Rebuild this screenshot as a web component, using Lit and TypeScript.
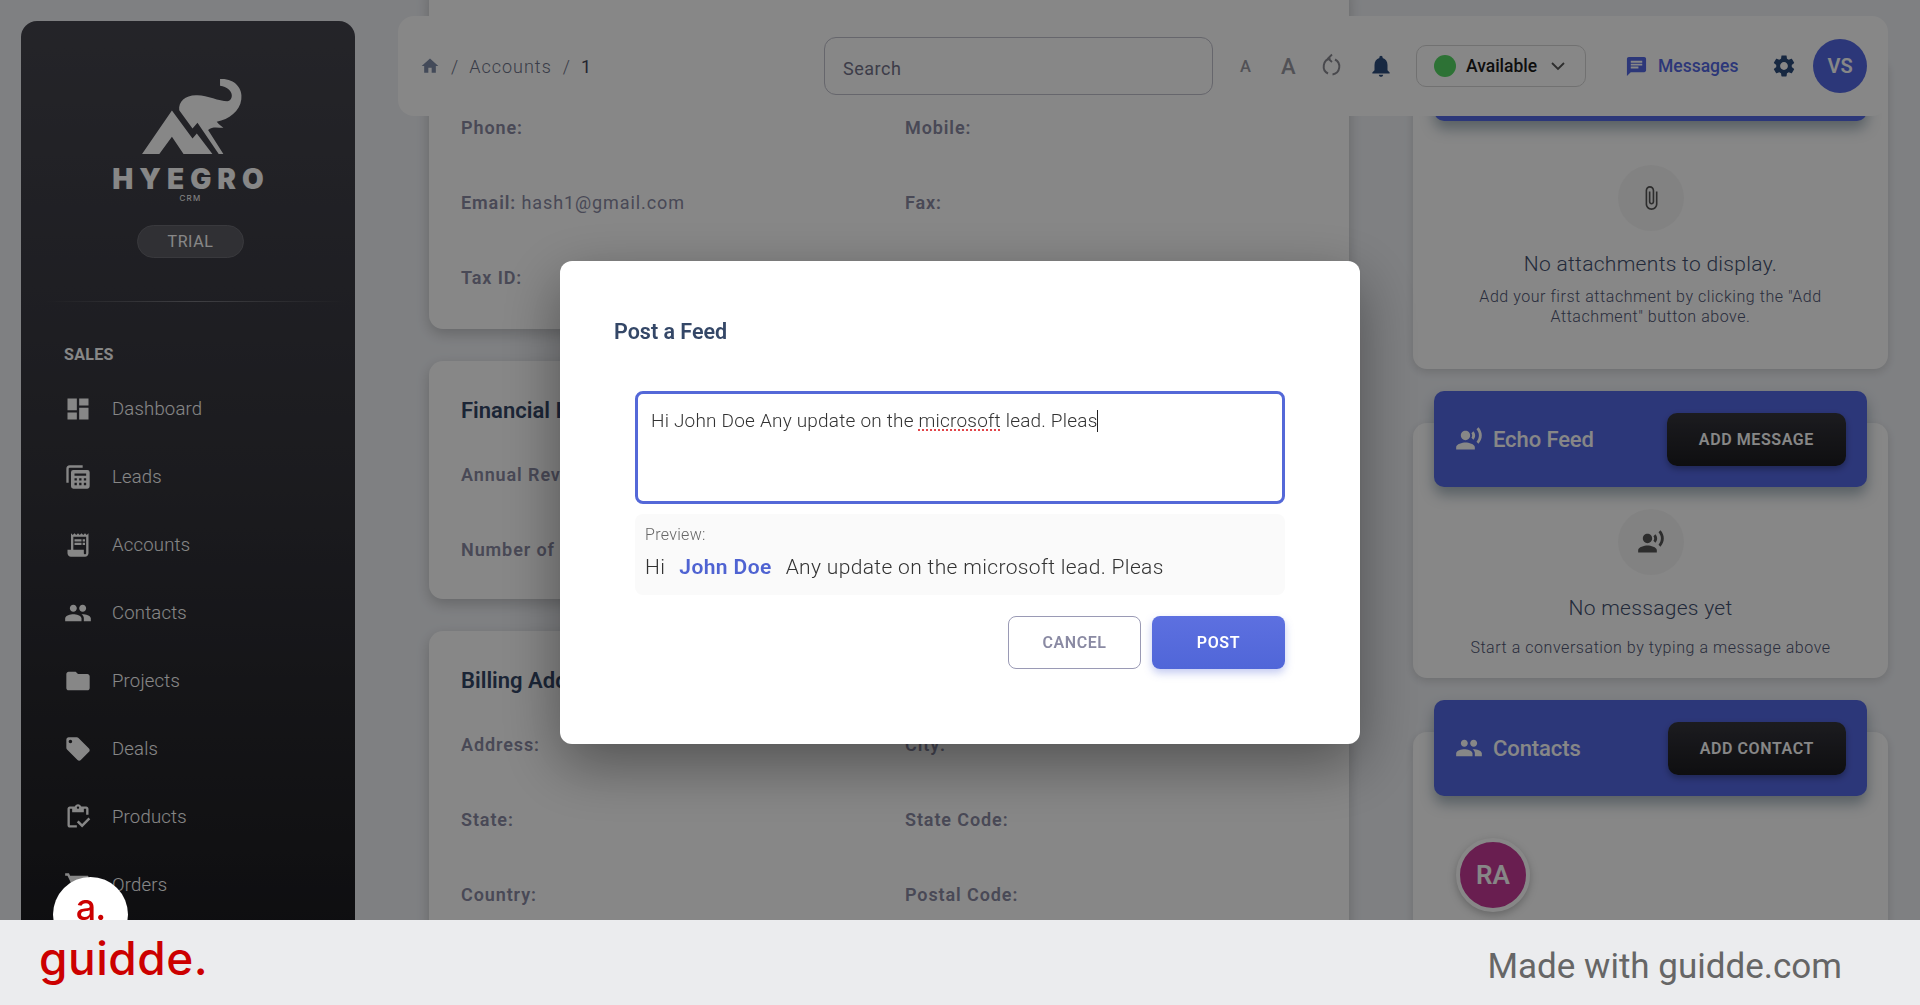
import { LitElement, html, css, svg } from 'lit';
import { customElement } from 'lit/decorators.js';

// material icon paths, 24x24
const ICONS: Record<string, string> = {
  dashboard: 'M3 13h8V3H3v10zm0 8h8v-6H3v6zm10 0h8V11h-8v10zm0-18v6h8V3h-8z',
  receipt:
    'M19.5 3.5L18 2l-1.5 1.5L15 2l-1.5 1.5L12 2l-1.5 1.5L9 2 7.5 3.5 6 2v14H3v3c0 1.66 1.34 3 3 3h12c1.66 0 3-1.34 3-3V2l-1.5 1.5zM19 19c0 .55-.45 1-1 1s-1-.45-1-1v-3H8V5h11v14zM9 7h6v2H9zm7 0h2v2h-2zM9 10h6v2H9zm7 0h2v2h-2z',
  people:
    'M16 11c1.66 0 2.99-1.34 2.99-3S17.66 5 16 5c-1.66 0-3 1.34-3 3s1.34 3 3 3zm-8 0c1.66 0 2.99-1.34 2.99-3S9.66 5 8 5C6.34 5 5 6.34 5 8s1.34 3 3 3zm0 2c-2.33 0-7 1.17-7 3.5V19h14v-2.5c0-2.33-4.67-3.5-7-3.5zm8 0c-.29 0-.62.02-.97.05 1.16.84 1.97 1.97 1.97 3.45V19h6v-2.5c0-2.33-4.67-3.5-7-3.5z',
  folder: 'M10 4H4c-1.1 0-1.99.9-1.99 2L2 18c0 1.1.9 2 2 2h16c1.1 0 2-.9 2-2V8c0-1.1-.9-2-2-2h-8l-2-2z',
  tag: 'M21.41 11.58l-9-9C12.05 2.22 11.55 2 11 2H4c-1.1 0-2 .9-2 2v7c0 .55.22 1.05.59 1.42l9 9c.36.36.86.58 1.41.58.55 0 1.05-.22 1.41-.59l7-7c.37-.36.59-.86.59-1.41 0-.55-.23-1.06-.59-1.42zM5.5 7C4.67 7 4 6.33 4 5.5S4.67 4 5.5 4 7 4.67 7 5.5 6.33 7 5.5 7z',
  clipboard:
    'M5 5h2v3h10V5h2v5h2V5c0-1.1-.9-2-2-2h-4.18C14.4 1.84 13.3 1 12 1s-2.4.84-2.82 2H5c-1.1 0-2 .9-2 2v14c0 1.1.9 2 2 2h6v-2H5V5zm7-2c.55 0 1 .45 1 1s-.45 1-1 1-1-.45-1-1 .45-1 1-1zM21 12.5L15.51 18l-3.01-3-1.5 1.5 4.51 4.5L22.5 14z',
  cart: 'M7 18c-1.1 0-1.99.9-1.99 2S5.9 22 7 22s2-.9 2-2-.9-2-2-2zM1 2v2h2l3.6 7.59-1.35 2.45c-.16.28-.25.61-.25.96 0 1.1.9 2 2 2h12v-2H7.42c-.14 0-.25-.11-.25-.25l.03-.12.9-1.63h7.45c.75 0 1.41-.41 1.75-1.03l3.58-6.49c.08-.14.12-.31.12-.48 0-.55-.45-1-1-1H5.21l-.94-2H1zm16 16c-1.1 0-1.99.9-1.99 2s.89 2 1.99 2 2-.9 2-2-.9-2-2-2z',
  home: 'M10 20v-6h4v6h5v-8h3L12 3 2 12h3v8z',
  bell: 'M12 22c1.1 0 2-.9 2-2h-4c0 1.1.89 2 2 2zm6-6v-5c0-3.07-1.64-5.64-4.5-6.32V4c0-.83-.67-1.5-1.5-1.5s-1.5.67-1.5 1.5v.68C7.63 5.36 6 7.92 6 11v5l-2 2v1h16v-1l-2-2z',
  chat: 'M20 2H4c-1.1 0-1.99.9-1.99 2L2 22l4-4h14c1.1 0 2-.9 2-2V4c0-1.1-.9-2-2-2zM6 9h12v2H6V9zm8 5H6v-2h8v2zm4-6H6V6h12v2z',
  gear: 'M19.14 12.94c.04-.3.06-.61.06-.94 0-.32-.02-.64-.07-.94l2.03-1.58c.18-.14.23-.41.12-.61l-1.92-3.32c-.12-.22-.37-.29-.59-.22l-2.39.96c-.5-.38-1.03-.7-1.62-.94l-.36-2.54c-.04-.24-.24-.41-.48-.41h-3.84c-.24 0-.43.17-.47.41l-.36 2.54c-.59.24-1.13.57-1.62.94l-2.39-.96c-.22-.08-.47 0-.59.22L2.74 8.87c-.12.21-.08.47.12.61l2.03 1.58c-.05.3-.09.63-.09.94s.02.64.07.94l-2.03 1.58c-.18.14-.23.41-.12.61l1.92 3.32c.12.22.37.29.59.22l2.39-.96c.5.38 1.03.7 1.62.94l.36 2.54c.05.24.24.41.48.41h3.84c.24 0 .44-.17.47-.41l.36-2.54c.59-.24 1.13-.56 1.62-.94l2.39.96c.22.08.47 0 .59-.22l1.92-3.32c.12-.22.07-.47-.12-.61l-2.01-1.58zM12 15.6c-1.98 0-3.6-1.62-3.6-3.6s1.62-3.6 3.6-3.6 3.6 1.62 3.6 3.6-1.62 3.6-3.6 3.6z',
  attach:
    'M16.5 6v11.5c0 2.21-1.79 4-4 4s-4-1.79-4-4V5c0-1.38 1.12-2.5 2.5-2.5s2.5 1.12 2.5 2.5v10.5c0 .55-.45 1-1 1s-1-.45-1-1V6H10v9.5c0 1.38 1.12 2.5 2.5 2.5s2.5-1.12 2.5-2.5V5c0-2.21-1.79-4-4-4S7 2.79 7 5v12.5c0 3.04 2.46 5.5 5.5 5.5s5.5-2.46 5.5-5.5V6h-1.5z',
  voice:
    'M9 13c2.21 0 4-1.79 4-4s-1.79-4-4-4-4 1.79-4 4 1.79 4 4 4zm0 2c-2.67 0-8 1.34-8 4v2h16v-2c0-2.66-5.33-4-8-4zm6.76-9.64l-1.68 1.69c.84 1.18.84 2.71 0 3.89l1.68 1.69c2.02-2.02 2.02-5.07 0-7.27zM20.07 2l-1.63 1.63c2.77 3.02 2.77 7.56 0 10.74L20.07 16c3.9-3.89 3.91-9.95 0-14z',
};

const icon = (name: string, size = 24) => html`<svg
  width=${size}
  height=${size}
  viewBox="0 0 24 24"
  fill="currentColor"
  ><path d=${ICONS[name]}></path
></svg>`;

// the stacked calculator on "Leads" isn't a plain material glyph
const leadsIcon = svg`<path d="M2 5a3 3 0 0 1 3-3h11v2H5a1 1 0 0 0-1 1v12H2z" fill="currentColor"></path>
  <path fill-rule="evenodd" fill="currentColor" d="M8 6h12a2 2 0 0 1 2 2v12a2 2 0 0 1-2 2H8a2 2 0 0 1-2-2V8a2 2 0 0 1 2-2zm1 3v2h10V9zm0 4v2h2v-2zm4 0v2h2v-2zm4 0v2h2v-2zM9 17v2h2v-2zm4 0v2h2v-2zm4 0v2h2v-2z"></path>`;

const NAV = [
  { label: 'Dashboard', icon: 'dashboard' },
  { label: 'Leads', icon: 'leads' },
  { label: 'Accounts', icon: 'receipt' },
  { label: 'Contacts', icon: 'people' },
  { label: 'Projects', icon: 'folder' },
  { label: 'Deals', icon: 'tag' },
  { label: 'Products', icon: 'clipboard' },
  { label: 'Orders', icon: 'cart' },
];

const CONTACT_FIELDS = [
  ['Phone:', ''],
  ['Mobile:', ''],
  ['Email:', 'hash1@gmail.com'],
  ['Fax:', ''],
  ['Tax ID:', ''],
  ['', ''],
];
const FINANCIAL_FIELDS = [
  ['Annual Revenue:', ''],
  ['', ''],
  ['Number of Employees:', ''],
  ['', ''],
];
const BILLING_FIELDS = [
  ['Address:', ''],
  ['City:', ''],
  ['State:', ''],
  ['State Code:', ''],
  ['Country:', ''],
  ['Postal Code:', ''],
];

@customElement('app-root')
export class AppRoot extends LitElement {
  static styles = css`
    :host {
      display: block;
      height: 1005px;
      overflow: hidden;
      font-family: Roboto, 'Liberation Sans', sans-serif;
    }
    .page {
      display: flex;
      flex-direction: column;
      height: 1005px;
    }
    .stage {
      position: relative;
      display: flex;
      height: 920px;
      overflow: hidden;
      background: #f0f2f6;
    }

    /* sidebar */
    .sidebar {
      flex: none;
      display: flex;
      flex-direction: column;
      align-items: center;
      width: 334px;
      height: 1000px;
      margin: 21px 0 0 21px;
      padding-top: 57px;
      box-sizing: border-box;
      border-radius: 16px 16px 0 0;
      background: linear-gradient(180deg, #45454e 0%, #34343b 45%, #17171a 100%);
      color: #fff;
    }
    .logo {
      margin-left: 8px;
      display: block;
    }
    .brand {
      margin-top: 8px;
      font-family: Inter, sans-serif;
      font-weight: 900;
      font-size: 28px;
      line-height: 30px;
      letter-spacing: 6px;
      margin-left: 6px;
    }
    .crm {
      font-family: Inter, sans-serif;
      font-size: 8px;
      line-height: 10px;
      letter-spacing: 1.2px;
      margin-left: 5px;
      margin-top: -1px;
    }
    .trial {
      margin: 22px 0 0 5px;
      width: 107px;
      height: 33px;
      box-sizing: border-box;
      display: flex;
      align-items: center;
      justify-content: center;
      border: 1px solid #6c6c74;
      border-radius: 17px;
      background: #5b5b62;
      font-size: 16px;
      letter-spacing: 0.6px;
    }
    .divider {
      align-self: stretch;
      height: 1px;
      margin: 43px 10px 0 24px;
      background: linear-gradient(90deg, transparent, #77777f 50%, transparent);
    }
    .nav {
      align-self: stretch;
      padding: 43px 0 0 43px;
    }
    .nav-title {
      font-size: 16px;
      font-weight: 700;
      line-height: 20px;
      letter-spacing: 0.3px;
    }
    .nav-item {
      display: flex;
      align-items: center;
      gap: 20px;
      height: 68px;
      font-size: 18.5px;
      font-weight: 300;
      letter-spacing: 0.2px;
    }
    .nav-title + .nav-item {
      margin-top: 10px;
    }
    .nav-item svg {
      flex: none;
    }

    /* page content */
    .content {
      display: flex;
      gap: 64px;
      margin-left: 74px;
    }
    .details {
      flex: none;
      width: 920px;
      display: flex;
      flex-direction: column;
      gap: 32px;
      margin-top: -19px;
    }
    .card {
      padding: 36px 32px 37.5px;
      background: #fff;
      border-radius: 14px;
      box-shadow: 0 5px 14px rgba(0, 0, 0, 0.2);
    }
    .card.scrolled {
      padding-top: 135px;
      padding-bottom: 39px;
    }
    .card h3 {
      margin: 0 0 37.5px;
      font-size: 22px;
      font-weight: 600;
      line-height: 28px;
      color: #344767;
    }
    .fields {
      display: grid;
      grid-template-columns: 428px 428px;
      column-gap: 16px;
      row-gap: 51px;
      font-size: 18px;
      line-height: 24px;
      letter-spacing: 0.9px;
      color: #8a8aa3;
    }
    .fields b {
      font-weight: 600;
    }

    /* right column */
    .side {
      flex: none;
      width: 475px;
      padding-top: 25px;
      display: flex;
      flex-direction: column;
      gap: 22px;
    }
    .tab {
      position: relative;
      display: flex;
      align-items: center;
      height: 96px;
      box-sizing: border-box;
      margin: 0 21px -64px;
      padding: 0 21px;
      border-radius: 10px;
      background: #5468e4;
      color: #fff;
      box-shadow: 0 8px 14px rgba(60, 90, 110, 0.45);
      font-size: 22px;
      font-weight: 500;
      letter-spacing: -0.1px;
    }
    .tab svg {
      flex: none;
      margin-right: 10px;
    }
    .tab button {
      margin-left: auto;
      height: 53px;
      padding: 0 32px;
      border: 0;
      border-radius: 10px;
      background: linear-gradient(180deg, #35353c, #1c1c20);
      color: #fff;
      font: 600 16px Roboto, sans-serif;
      letter-spacing: 0.6px;
      box-shadow: 0 3px 6px rgba(0, 0, 0, 0.3);
    }
    .panel {
      padding: 64px 0 0;
      background: #fff;
      border-radius: 14px;
      box-shadow: 0 3px 10px rgba(0, 0, 0, 0.14);
      text-align: center;
    }
    .empty {
      display: flex;
      flex-direction: column;
      align-items: center;
      padding: 22px 16px 20px;
      color: #4f5674;
    }
    .empty.roomy {
      padding: 44px 36px 42px;
    }
    .bubble {
      display: flex;
      align-items: center;
      justify-content: center;
      width: 66px;
      height: 66px;
      border-radius: 50%;
      background: #f6f6f6;
      color: #555;
    }
    .empty strong {
      margin-top: 20px;
      font-size: 21px;
      font-weight: 300;
      line-height: 26px;
      letter-spacing: 0.3px;
      color: #42506f;
    }
    .empty span {
      margin-top: 17px;
      font-size: 16px;
      font-weight: 300;
      line-height: 20px;
      letter-spacing: 0.55px;
    }
    .empty.roomy span {
      margin-top: 10px;
    }
    .contacts {
      height: 300px;
      padding: 106px 0 0 43px;
      box-sizing: border-box;
      text-align: left;
    }
    .initials {
      display: flex;
      align-items: center;
      justify-content: center;
      width: 66px;
      height: 66px;
      border: 4px solid #fff;
      border-radius: 50%;
      background: #c63998;
      color: #fff;
      font-size: 26px;
      font-weight: 600;
      box-shadow: 0 3px 8px rgba(0, 0, 0, 0.25);
    }

    /* top bar floats over the scrolled content */
    .topbar {
      position: absolute;
      left: 398px;
      top: 16px;
      width: 1490px;
      height: 100px;
      box-sizing: border-box;
      display: flex;
      align-items: center;
      padding: 0 21px 0 22px;
      border-radius: 16px;
      background: #fff;
      color: #555;
      font-size: 18px;
    }
    .topbar > * {
      flex: none;
    }
    .crumbs {
      display: flex;
      align-items: center;
      width: 404px;
      font-weight: 300;
      letter-spacing: 1px;
      color: #6d7288;
    }
    .crumbs svg {
      color: #7f8da8;
    }
    .crumbs .sep {
      margin: 0 10px 0 11px;
    }
    .crumbs .now {
      color: #44475a;
      font-weight: 400;
    }
    .search {
      width: 389px;
      height: 58px;
      box-sizing: border-box;
      padding: 4px 18px 0;
      display: flex;
      align-items: center;
      border: 1px solid #c0c0cc;
      border-radius: 12px;
      color: #73738a;
      letter-spacing: 0.5px;
    }
    .tools {
      display: flex;
      align-items: center;
      margin-left: 27px;
    }
    .tool-a {
      font-weight: 500;
      color: #9a9aa2;
      font-size: 16.5px;
      width: 41px;
    }
    .tool-a.big {
      font-size: 22px;
      width: 39px;
    }
    .bell {
      display: flex;
      margin-left: 24px;
      color: #2d4c7c;
    }
    .status {
      display: flex;
      align-items: center;
      width: 170px;
      height: 42px;
      box-sizing: border-box;
      margin-left: 22px;
      padding-left: 17px;
      border: 1px solid #d6d6d6;
      border-radius: 10px;
      color: #1b1b1b;
      font-weight: 500;
      font-size: 17.5px;
    }
    .dot {
      width: 22px;
      height: 22px;
      margin-right: 10px;
      border-radius: 50%;
      background: #55d864;
    }
    .status svg {
      margin-left: 12px;
      color: #555;
    }
    .messages {
      display: flex;
      align-items: center;
      margin-left: 39px;
      color: #5468e4;
      font-weight: 500;
      font-size: 17.5px;
    }
    .messages svg {
      margin-right: 10px;
    }
    .gear {
      display: flex;
      margin-left: 33px;
      color: #2d4c7c;
    }
    .me {
      display: flex;
      align-items: center;
      justify-content: center;
      width: 54px;
      height: 54px;
      margin-left: auto;
      border-radius: 50%;
      background: #5468e4;
      color: #fff;
      font-size: 20px;
      font-weight: 600;
    }

    /* dialog */
    .scrim {
      position: fixed;
      inset: 0;
      z-index: 10;
      display: flex;
      align-items: center;
      justify-content: center;
      background: rgba(0, 0, 0, 0.47);
    }
    .modal {
      width: 800px;
      height: 483px;
      box-sizing: border-box;
      padding: 57px 75px 0 54px;
      background: #fff;
      border-radius: 12px;
      box-shadow: 0 20px 60px rgba(0, 0, 0, 0.4);
    }
    .modal h2 {
      margin: 0 0 45px;
      font-size: 21.5px;
      font-weight: 600;
      line-height: 28px;
      color: #344767;
    }
    .modal-body {
      margin-left: 21px;
    }
    .editor {
      height: 113px;
      box-sizing: border-box;
      padding: 15px 13px;
      border: 3px solid #5468d8;
      border-radius: 8px;
      font-size: 19px;
      font-weight: 300;
      line-height: 24px;
      letter-spacing: 0.2px;
      color: #333;
    }
    .typo {
      text-decoration: underline dotted #e2454a;
      text-underline-offset: 3px;
    }
    .caret {
      display: inline-block;
      width: 1px;
      height: 22px;
      vertical-align: -5px;
      background: #222;
    }
    .preview {
      height: 81px;
      box-sizing: border-box;
      margin-top: 10px;
      padding: 11px 10px 0;
      border-radius: 8px;
      background: #fafafa;
    }
    .preview small {
      display: block;
      font-size: 16px;
      font-weight: 300;
      line-height: 20px;
      letter-spacing: 0.3px;
      color: #666;
    }
    .preview-line {
      display: flex;
      gap: 14px;
      margin-top: 7px;
      font-size: 21px;
      font-weight: 300;
      line-height: 30px;
      letter-spacing: 0.35px;
      color: #333;
    }
    .preview-line b {
      font-weight: 600;
      letter-spacing: 0.4px;
      color: #4f63d2;
    }
    .actions {
      display: flex;
      justify-content: flex-end;
      gap: 11px;
      margin-top: 21px;
    }
    .actions button {
      width: 133px;
      height: 53px;
      border-radius: 8px;
      font: 600 16px Roboto, sans-serif;
      letter-spacing: 0.6px;
    }
    .cancel {
      border: 1.5px solid #9a9ab5;
      background: #fff;
      color: #8a8aa3;
    }
    .post {
      border: 0;
      background: linear-gradient(180deg, #5d70e0, #5066d8);
      color: #fff;
      box-shadow: 0 4px 8px rgba(84, 104, 216, 0.35);
    }

    /* guidde branding */
    .badge {
      position: absolute;
      left: 53px;
      top: 877px;
      z-index: 20;
      width: 75px;
      height: 75px;
      border-radius: 50%;
      background: #fff;
      display: flex;
      justify-content: center;
      color: #cc0000;
      font-family: Inter, sans-serif;
      font-size: 36px;
      font-weight: 500;
      line-height: 60px;
      letter-spacing: -1px;
    }
    .footer {
      position: relative;
      z-index: 30;
      flex: none;
      height: 85px;
      display: flex;
      align-items: center;
      justify-content: space-between;
      padding: 0 78px 0 39px;
      background: #ebecee;
    }
    .wordmark {
      font-family: Inter, sans-serif;
      font-size: 46px;
      font-weight: 500;
      letter-spacing: 0.5px;
      color: #cc0000;
      margin-top: -10px;
    }
    .made {
      font-size: 35px;
      color: #666;
      margin-top: 7px;
    }
  `;

  private fields(rows: string[][]) {
    return html`<div class="fields">
      ${rows.map(
        ([label, value]) => html`<div><b>${label}</b> ${value}</div>`
      )}
    </div>`;
  }

  private navIcon(name: string) {
    if (name === 'leads') {
      return html`<svg width="28" height="28" viewBox="0 0 24 24">${leadsIcon}</svg>`;
    }
    return icon(name, 28);
  }

  render() {
    return html`
      <div class="page">
        <div class="stage">
          <aside class="sidebar">
            <svg class="logo" width="103" height="78" viewBox="150 55 310 235" fill="#fff">
              <path d="M243 153L153 284H205L243 232L278 284H365L318 222L305 237Z"></path>
              <path
                d="M265 152C262 125 285 105 320 107C350 108 385 125 410 125C430 122 432 85 388 78V58C430 55 458 85 452 120C448 155 415 180 378 187C385 197 392 200 398 205C380 205 365 200 352 212L398 284H384L320 190L305 207Z"
              ></path>
            </svg>
            <div class="brand">HYEGRO</div>
            <div class="crm">CRM</div>
            <div class="trial">TRIAL</div>
            <div class="divider"></div>
            <nav class="nav">
              <div class="nav-title">SALES</div>
              ${NAV.map(
                (item) => html`<div class="nav-item">
                  ${this.navIcon(item.icon)}<span>${item.label}</span>
                </div>`
              )}
            </nav>
          </aside>

          <main class="content">
            <section class="details">
              <div class="card scrolled">${this.fields(CONTACT_FIELDS)}</div>
              <div class="card">
                <h3>Financial Information</h3>
                ${this.fields(FINANCIAL_FIELDS)}
              </div>
              <div class="card">
                <h3>Billing Address</h3>
                ${this.fields(BILLING_FIELDS)}
              </div>
            </section>

            <section class="side">
              <div>
                <div class="tab"></div>
                <div class="panel">
                  <div class="empty roomy">
                    <div class="bubble">${icon('attach', 26)}</div>
                    <strong>No attachments to display.</strong>
                    <span>Add your first attachment by clicking the "Add Attachment" button above.</span>
                  </div>
                </div>
              </div>
              <div>
                <div class="tab">
                  ${icon('voice', 28)}Echo Feed
                  <button>ADD MESSAGE</button>
                </div>
                <div class="panel">
                  <div class="empty">
                    <div class="bubble">${icon('voice', 28)}</div>
                    <strong>No messages yet</strong>
                    <span>Start a conversation by typing a message above</span>
                  </div>
                </div>
              </div>
              <div>
                <div class="tab">
                  ${icon('people', 28)}Contacts
                  <button>ADD CONTACT</button>
                </div>
                <div class="panel contacts">
                  <div class="initials">RA</div>
                </div>
              </div>
            </section>
          </main>

          <header class="topbar">
            <div class="crumbs">
              ${icon('home', 20)}
              <span class="sep">/</span><span>Accounts</span>
              <span class="sep">/</span><span class="now">1</span>
            </div>
            <div class="search">Search</div>
            <div class="tools">
              <span class="tool-a">A</span>
              <span class="tool-a big">A</span>
              <svg width="24" height="26" viewBox="0 0 24 26" fill="none" stroke="#8a8a92" stroke-width="2">
                <path d="M10.5 5.5A8 8 0 0 0 8 20.5"></path>
                <path d="M15 6.5A8 8 0 0 1 12.5 21.5"></path>
                <path d="M12 1.5L8 5.5L12 9" stroke-width="1.8"></path>
              </svg>
              <span class="bell">${icon('bell', 26)}</span>
            </div>
            <div class="status">
              <span class="dot"></span>Available
              <svg width="18" height="18" viewBox="0 0 18 18" fill="none" stroke="currentColor" stroke-width="1.8">
                <path d="M3 6l6 6 6-6"></path>
              </svg>
            </div>
            <div class="messages">${icon('chat', 23)}Messages</div>
            <span class="gear">${icon('gear', 26)}</span>
            <div class="me">VS</div>
          </header>

          <div class="badge">a.</div>

          <div class="scrim">
            <div class="modal">
              <h2>Post a Feed</h2>
              <div class="modal-body">
                <div class="editor">
                  Hi John Doe Any update on the <span class="typo">microsoft</span> lead. Pleas<span
                    class="caret"
                  ></span>
                </div>
                <div class="preview">
                  <small>Preview:</small>
                  <div class="preview-line">
                    <span>Hi</span><b>John Doe</b><span>Any update on the microsoft lead. Pleas</span>
                  </div>
                </div>
                <div class="actions">
                  <button class="cancel">CANCEL</button>
                  <button class="post">POST</button>
                </div>
              </div>
            </div>
          </div>
        </div>

        <footer class="footer">
          <span class="wordmark">guidde.</span>
          <span class="made">Made with guidde.com</span>
        </footer>
      </div>
    `;
  }
}
